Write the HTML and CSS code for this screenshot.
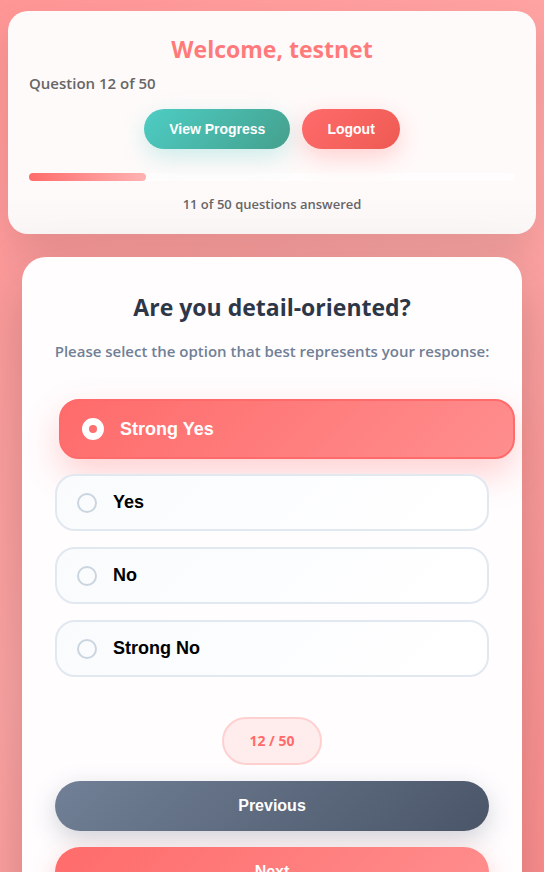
FILE: index.html
```html
<!DOCTYPE html>
<html lang="en">
<head>
<meta charset="utf-8">
<meta name="viewport" content="width=device-width, initial-scale=1">
<title>Questionnaire</title>
<link rel="stylesheet" href="styles.css">
</head>
<body>
<div class="page">
  <header class="header">
    <h1 class="welcome">Welcome, testnet</h1>
    <p class="position">Question 12 of 50</p>
    <div class="actions">
      <button class="pill pill-progress" type="button">View Progress</button>
      <button class="pill pill-logout" type="button">Logout</button>
    </div>
    <div class="progress" role="progressbar" aria-label="Questions answered" aria-valuemin="0" aria-valuemax="50" aria-valuenow="11">
      <div class="progress-fill" style="width: 24%"></div>
    </div>
    <p class="answered">11 of 50 questions answered</p>
  </header>
  <main class="card">
    <h2 class="question" id="question">Are you detail-oriented?</h2>
    <p class="hint">Please select the option that best represents your response:</p>
    <div class="options" role="radiogroup" aria-labelledby="question">
      <label class="option selected"><input type="radio" name="answer" checked><span>Strong Yes</span></label>
      <label class="option"><input type="radio" name="answer"><span>Yes</span></label>
      <label class="option"><input type="radio" name="answer"><span>No</span></label>
      <label class="option"><input type="radio" name="answer"><span>Strong No</span></label>
    </div>
    <nav class="steps" aria-label="Question navigation">
      <span class="counter">12 / 50</span>
      <button class="step previous" type="button">Previous</button>
      <button class="step next" type="button">Next</button>
    </nav>
  </main>
</div>
</body>
</html>
```

FILE: styles.css
```css
* {
  box-sizing: border-box;
}

html {
  scrollbar-width: none;
}

body {
  margin: 0;
  font-family: "Segoe UI", "Open Sans", sans-serif;
  color: #2d3748;
}

h1, h2, p {
  margin: 0;
}

button {
  border: 0;
  color: #fff;
  font-family: "Liberation Sans", Arial, sans-serif;
  font-weight: 700;
  cursor: pointer;
}

.page {
  height: 100vh;
  overflow-y: auto;
  scrollbar-width: none;
  padding: 11px 8px;
  background: linear-gradient(135deg, #ff9696 0%, #ffa6a6 50%, #ff9090 100%);
}

.header {
  padding: 22px 21px 19px;
  border-radius: 20px;
  background: linear-gradient(#fffafa 80%, #fbf6f6);
  box-shadow: 0 20px 40px rgba(0, 0, 0, 0.1);
}

.welcome {
  line-height: 32px;
  font-size: 23px;
  font-weight: 700;
  text-align: center;
  color: #ff7b7b;
}

.position {
  margin-top: 6px;
  line-height: 24px;
  font-size: 15px;
  font-weight: 600;
  color: #666;
}

.actions {
  display: flex;
  justify-content: center;
  gap: 12px;
  margin: 14px 0 24px;
}

.pill {
  height: 40px;
  padding: 0 25px;
  border-radius: 20px;
  font-size: 14px;
}

.pill-progress {
  background: linear-gradient(135deg, #4ecdc4, #44a08d);
  box-shadow: 0 8px 25px rgba(78, 205, 196, 0.3);
}

.pill-logout {
  background: linear-gradient(135deg, #ff6b6b, #ee5a52);
  box-shadow: 0 8px 25px rgba(255, 107, 107, 0.3);
}

.progress {
  height: 8px;
  border-radius: 4px;
  background: rgba(255, 255, 255, 0.5);
}

.progress-fill {
  height: 100%;
  border-radius: 4px;
  background: linear-gradient(90deg, #ff6b6b, #ffb3b3);
}

.answered {
  margin-top: 12px;
  line-height: 22px;
  font-size: 13px;
  font-weight: 600;
  text-align: center;
  color: #666;
}

.card {
  margin: 23px 14px 0;
  padding: 32px 33px;
  border-radius: 24px;
  background: #fffdfe;
  box-shadow: 0 20px 60px rgba(0, 0, 0, 0.2);
}

.question {
  line-height: 36px;
  font-size: 23px;
  font-weight: 700;
  text-align: center;
}

.hint {
  margin: 14px -8px 0;
  line-height: 24px;
  font-size: 15px;
  font-weight: 600;
  text-align: center;
  color: #718096;
}

.options {
  display: grid;
  gap: 16px;
  margin-top: 38px;
}

.option {
  display: flex;
  align-items: center;
  gap: 16px;
  height: 57px;
  padding: 0 20px;
  border: 2px solid #e2e8f0;
  border-radius: 20px;
  background: linear-gradient(135deg, #f9fbfd, #fff);
  font-family: "Liberation Sans", Arial, sans-serif;
  font-size: 18px;
  font-weight: 700;
  color: #000;
  cursor: pointer;
}

.option input {
  width: 20px;
  height: 20px;
  margin: 0;
  border: 2px solid #cbd5e0;
  border-radius: 50%;
  appearance: none;
}

.option.selected {
  height: 60px;
  margin: -2px -26px -1px 4px;
  padding: 0 21px;
  border-color: #ff6b6b;
  background: linear-gradient(135deg, #ff6b6b, #ff8e8e);
  box-shadow: 0 15px 35px rgba(255, 107, 107, 0.3);
  color: #fff;
}

.option.selected input {
  width: 22px;
  height: 22px;
  border: 7px solid #fff;
}

.steps {
  display: flex;
  flex-direction: column;
  align-items: center;
  gap: 16px;
  margin-top: 40px;
}

.counter {
  padding: 11px 25px;
  border: 2px solid #ffd0d0;
  border-radius: 24px;
  background: #ffeded;
  line-height: 22px;
  font-size: 14px;
  font-weight: 700;
  color: #ff6b6b;
}

.step {
  width: 100%;
  height: 50px;
  border-radius: 25px;
  font-size: 16px;
}

.previous {
  background: linear-gradient(135deg, #718096, #4a5568);
  box-shadow: 0 8px 25px rgba(74, 85, 104, 0.25);
}

.next {
  background: linear-gradient(135deg, #ff6b6b, #ff8e8e);
  box-shadow: 0 8px 25px rgba(255, 107, 107, 0.3);
}
```
